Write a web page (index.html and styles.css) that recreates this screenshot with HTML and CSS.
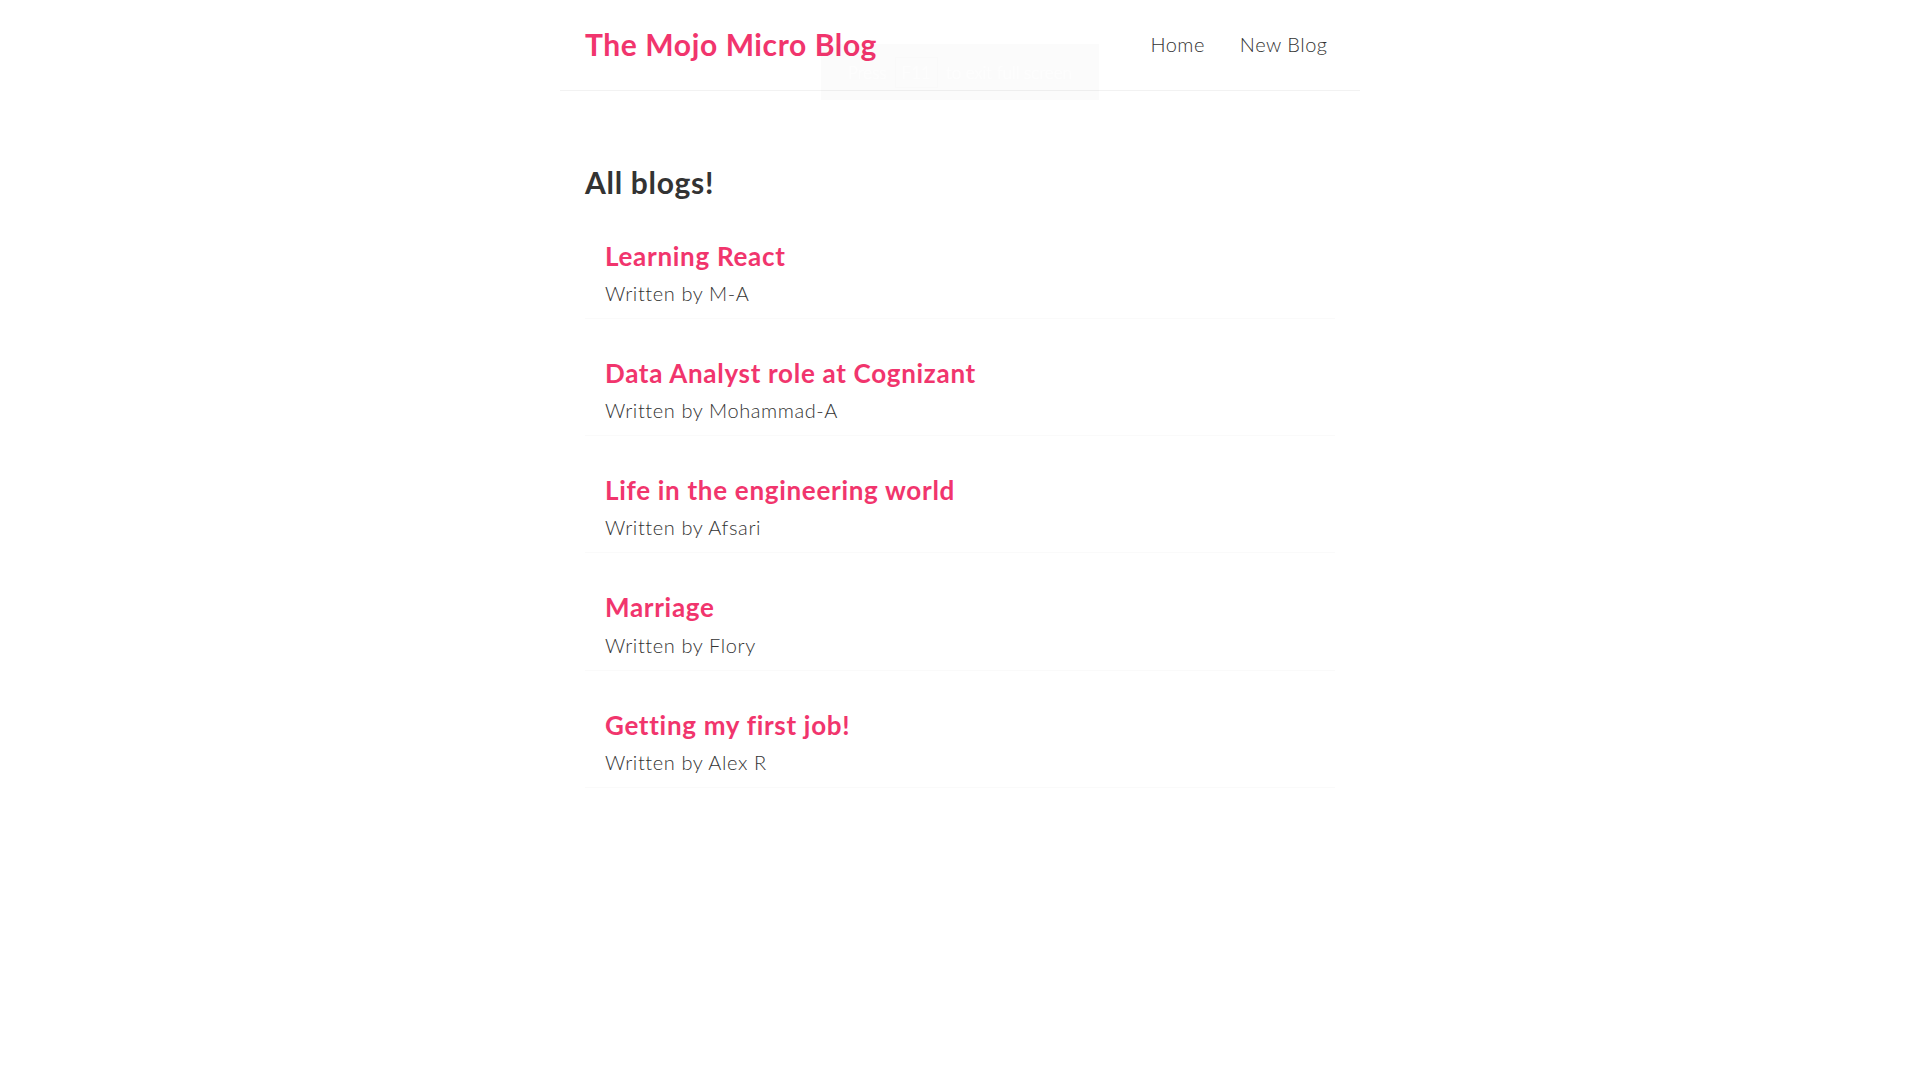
FILE: index.html
```html
<!DOCTYPE html>
<html lang="en">
<head>
<meta charset="utf-8">
<title>The Mojo Micro Blog</title>
<link rel="stylesheet" href="styles.css">
</head>
<body>
<div class="app">
  <nav class="navbar">
    <h1 class="brand">The Mojo Micro Blog</h1>
    <div class="links">
      <a href="#">Home</a>
      <a href="#">New Blog</a>
    </div>
  </nav>
  <main class="content">
    <h2 class="page-title">All blogs!</h2>
    <div class="blog-list">
      <div class="blog-preview">
        <h2>Learning React</h2>
        <p>Written by M-A</p>
      </div>
      <div class="blog-preview">
        <h2>Data Analyst role at Cognizant</h2>
        <p>Written by Mohammad-A</p>
      </div>
      <div class="blog-preview">
        <h2>Life in the engineering world</h2>
        <p>Written by Afsari</p>
      </div>
      <div class="blog-preview">
        <h2>Marriage</h2>
        <p>Written by Flory</p>
      </div>
      <div class="blog-preview">
        <h2>Getting my first job!</h2>
        <p>Written by Alex R</p>
      </div>
    </div>
  </main>
</div>
<div class="fs-hint"><span>Press</span><span class="key">F11</span><span>to exit full screen</span></div>
</body>
</html>
```
FILE: styles.css
```css
* {
  margin: 0;
  font-family: "Lato", "Noto Sans", sans-serif;
  color: #333;
}
body {
  margin: 0;
  background: #fff;
}
.navbar {
  padding: 24px 25px 26px;
  display: flex;
  align-items: center;
  max-width: 750px;
  margin: 0 auto;
  border-bottom: 1px solid #f2f2f2;
}
.brand {
  color: #f1356d;
  font-size: 30px;
  line-height: 38px;
  font-weight: 700;
  letter-spacing: 0.6px;
}
.links {
  margin-left: auto;
  display: flex;
}
.links a {
  margin-left: 20px;
  padding: 7.5px;
  text-decoration: none;
  font-size: 20px;
  line-height: 25px;
  font-weight: 300;
  letter-spacing: 0.5px;
}
.content {
  max-width: 750px;
  margin: 48px auto 50px;
  padding: 25px;
}
.page-title {
  font-size: 30px;
  line-height: 37.5px;
  font-weight: 700;
  letter-spacing: 0.7px;
}
.blog-preview {
  padding: 14px 20px 12px;
  margin: 25px 0;
  border-bottom: 1px solid #fafafa;
}
.blog-preview h2 {
  font-size: 26px;
  line-height: 31.25px;
  color: #f1356d;
  margin-bottom: 9px;
  font-weight: 700;
  letter-spacing: 0.7px;
}
.blog-preview p {
  font-size: 20px;
  line-height: 25px;
  font-weight: 300;
  letter-spacing: 0.6px;
}
.fs-hint {
  position: fixed;
  left: 821px;
  top: 44px;
  width: 278px;
  height: 56px;
  background: rgba(0, 0, 0, 0.015);
  display: flex;
  align-items: center;
  justify-content: center;
  gap: 8px;
}
.fs-hint span {
  color: rgba(255, 255, 255, 0.5);
  font-size: 17px;
  font-weight: 300;
}
.fs-hint .key {
  border: 1px solid rgba(0, 0, 0, 0.012);
  padding: 4px 6px;
}
```
